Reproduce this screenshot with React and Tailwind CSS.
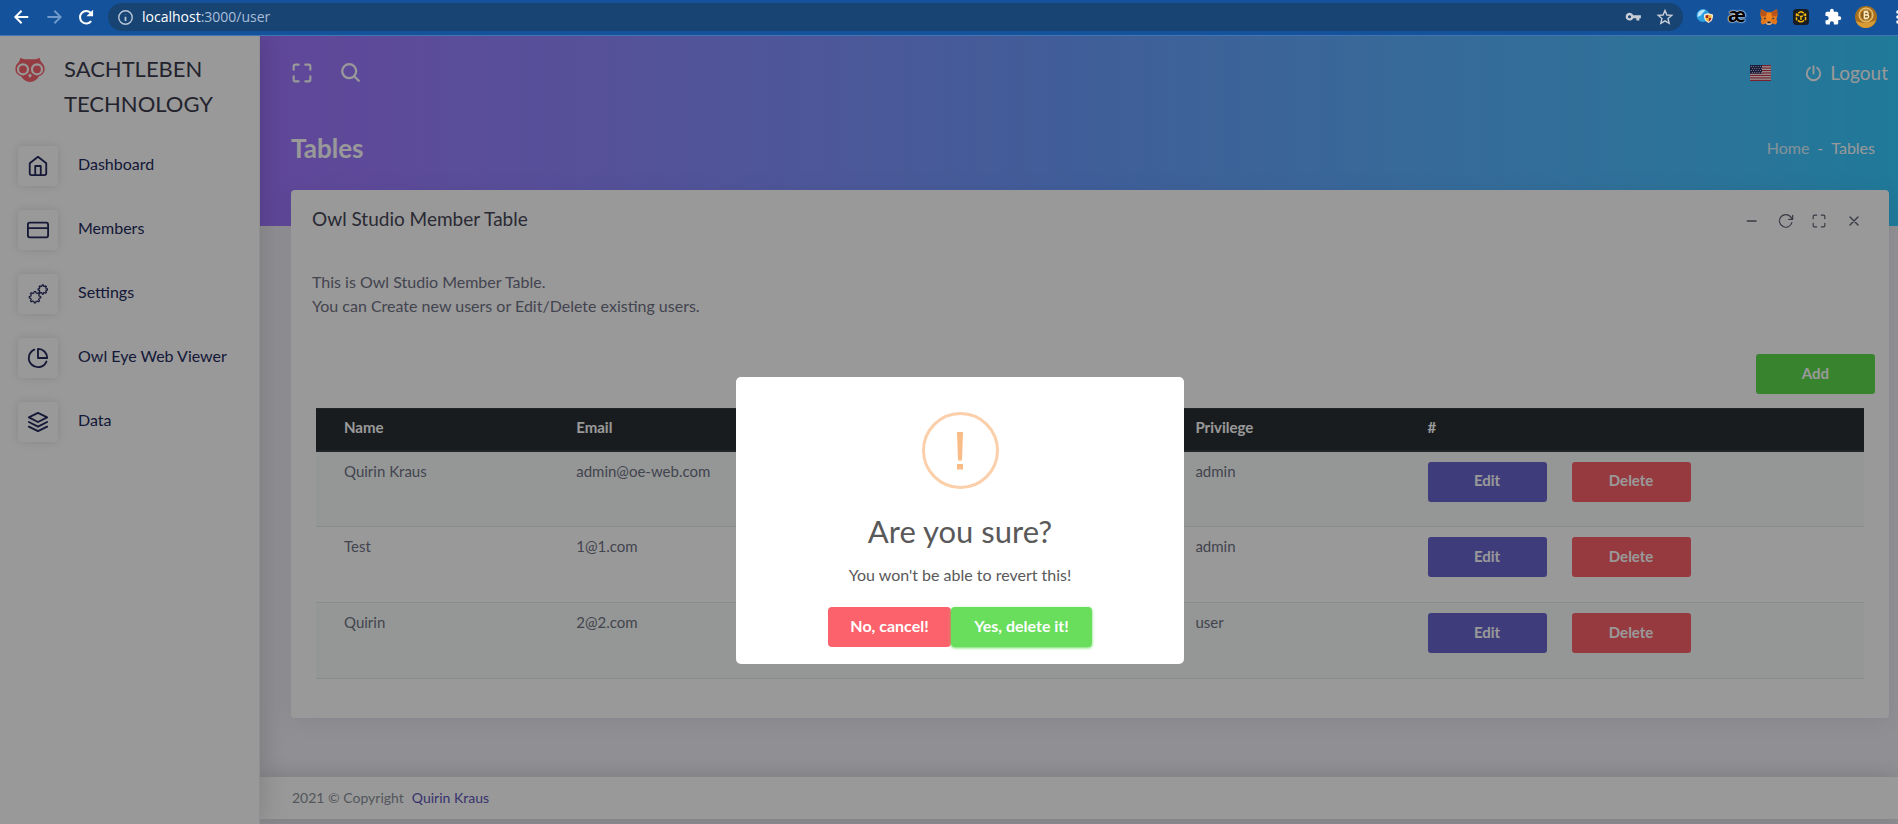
import React from "react";

const heading = "font-['Lato',sans-serif]";

function Svg({ size = 22, box = 24, width = 2, className = "", children }) {
  return (
    <svg
      width={size}
      height={size}
      viewBox={`0 0 ${box} ${box}`}
      fill="none"
      stroke="currentColor"
      strokeWidth={width}
      strokeLinecap="round"
      strokeLinejoin="round"
      className={className}
      aria-hidden="true"
    >
      {children}
    </svg>
  );
}

function gearPath(cx, cy, outer, inner, teeth) {
  const points = [];
  const step = (Math.PI * 2) / teeth;
  for (let i = 0; i < teeth; i++) {
    const a = i * step;
    [
      [inner, -0.3],
      [outer, -0.16],
      [outer, 0.16],
      [inner, 0.3],
    ].forEach(([r, k]) => {
      points.push(`${(cx + r * Math.cos(a + k * step)).toFixed(2)} ${(cy + r * Math.sin(a + k * step)).toFixed(2)}`);
    });
  }
  return `M${points.join("L")}Z`;
}

const HomeIcon = () => (
  <Svg>
    <path d="M3 9l9-7 9 7v11a2 2 0 0 1-2 2H5a2 2 0 0 1-2-2z" />
    <path d="M9 22V12h6v10" />
  </Svg>
);
const CardIcon = () => (
  <Svg>
    <rect x="1" y="4" width="22" height="16" rx="2" />
    <path d="M1 10h22" />
  </Svg>
);
const GearsIcon = () => (
  <Svg width={1.3}>
    <path d={gearPath(8.7, 15.5, 6.3, 4.8, 8)} />
    <path d={gearPath(17.2, 7.1, 5.1, 3.8, 8)} />
  </Svg>
);
const PieIcon = () => (
  <Svg>
    <path d="M21.21 15.89A10 10 0 1 1 8 2.83" />
    <path d="M22 12A10 10 0 0 0 12 2v10z" />
  </Svg>
);
const LayersIcon = () => (
  <Svg>
    <path d="M12 2 2 7l10 5 10-5-10-5z" />
    <path d="m2 17 10 5 10-5" />
    <path d="m2 12 10 5 10-5" />
  </Svg>
);
const ExpandIcon = ({ size, width }) => (
  <Svg size={size} width={width}>
    <path d="M8 2H4a2 2 0 0 0-2 2v4M22 8V4a2 2 0 0 0-2-2h-4M16 22h4a2 2 0 0 0 2-2v-4M2 16v4a2 2 0 0 0 2 2h4" />
  </Svg>
);

function Owl() {
  return (
    <svg width="30" height="26" viewBox="0 0 30 26" aria-hidden="true" className="shrink-0">
      <path
        d="M5.500 0.800 C5 2.500 4.500 4 3.600 5.300 C1.400 7 .4 9.500 .4 12 C.4 16 3 18.300 6 19.300 C8 22.500 11 25 15 25 C19 25 22 22.500 24 19.300 C27 18.300 29.600 16 29.600 12 C29.600 9.500 28.600 7 26.400 5.300 C25.500 4 25 2.500 24.500 .8 C22.500 2 20.500 2.300 18.500 2.300 L11.500 2.300 C9.500 2.300 7.500 2 5.500 .8Z"
        fill="#f9656f"
      />
      <circle cx="8" cy="12.300" r="5" fill="none" stroke="#fff" strokeWidth="2.200" />
      <circle cx="22" cy="12.300" r="5" fill="none" stroke="#fff" strokeWidth="2.200" />
      <path d="M15 16.500l1.800 2-1.800 2.400-1.800-2.400z" fill="#fff" />
    </svg>
  );
}

function Flag() {
  const stripes = [0, 1, 2, 3, 4, 5, 6];
  const stars = [];
  for (let r = 0; r < 4; r++) for (let c = 0; c < 5; c++) stars.push([1.3 + c * 2.3 + (r % 2), 1.4 + r * 2]);
  return (
    <svg width="21" height="16" viewBox="0 0 21 16" role="img" aria-label="English">
      <rect width="21" height="16" fill="#fff" />
      {stripes.map((s) => (
        <rect key={s} y={s * 2.46} width="21" height="1.23" fill="#c9364a" />
      ))}
      <rect width="12" height="8.6" fill="#2b2f62" />
      {stars.map(([x, y]) => (
        <circle key={`${x}-${y}`} cx={x} cy={y} r="0.5" fill="#fff" />
      ))}
    </svg>
  );
}

function BrowserBar() {
  return (
    <header className="flex h-9 items-center border-b border-[#4377b4] bg-[#14539c] pb-px pl-3 font-['Open_Sans',sans-serif] text-white">
      <div className="flex items-center gap-3">
        <button aria-label="Back" className="size-5">
          <Svg size={20} width={2.4}><path d="M19.500 12H5M11.500 4.500 4 12l7.500 7.500" strokeLinecap="butt" strokeLinejoin="miter" /></Svg>
        </button>
        <button aria-label="Forward" className="size-5 text-[#729bcb]">
          <Svg size={20} width={2.200}><path d="M4 12h15M12.500 4.500 20 12l-7.500 7.500" strokeLinecap="butt" strokeLinejoin="miter" /></Svg>
        </button>
        <button aria-label="Reload" className="size-5">
          <svg width="20" height="20" viewBox="0 0 24 24" fill="none" aria-hidden="true">
            <path d="M18.200 17A7.500 7.500 0 1 1 17.600 7" stroke="#fff" strokeWidth="2.400" />
            <path d="M20.500 3.200v8h-8z" fill="#fff" />
          </svg>
        </button>
      </div>
      <div className="ml-3 flex h-7 flex-1 items-center rounded-full bg-[#184474] pr-2 pl-[9px]">
        <Svg size={17} width={2} className="mr-2 shrink-0 text-[#b8c6d8]">
          <circle cx="12" cy="12" r="9.500" />
          <path d="M12 11v6M12 7v.5" strokeLinecap="butt" strokeWidth="2.500" />
        </Svg>
        <div className="flex-1 text-sm text-[#a9bed6]">
          <span className="text-white">localhost</span>:3000/user
        </div>
        <div className="flex gap-3 text-[#c9ced6]">
          <button aria-label="Passwords" className="size-5">
            <svg width="18" height="18" viewBox="0 0 24 24" fill="currentColor" fillRule="evenodd" aria-hidden="true" className="mx-auto">
              <path d="M12.300 9.700A5.200 5.200 0 1 0 12.300 13.500H16.500V16.800H20.500V13.500H22.500V9.700ZM7.400 13.700A2.100 2.100 0 1 1 7.400 9.500A2.100 2.100 0 0 1 7.400 13.700Z" />
            </svg>
          </button>
          <button aria-label="Bookmark" className="size-5">
            <Svg size={20} width={1.700}>
              <path strokeLinejoin="miter" d="m12 4.300 2.300 5.300 5.800.5-4.400 3.800 1.300 5.700-5-3-5 3 1.300-5.700-4.400-3.800 5.800-.5z" />
            </Svg>
          </button>
        </div>
      </div>
      <div className="ml-3 flex shrink-0 items-center gap-3">
        <svg width="20" height="20" viewBox="0 0 20 20" aria-hidden="true">
          <circle cx="8" cy="8.500" r="6.500" fill="#2d9fe0" />
          <path d="M3 6c2-3 5-3.500 7-3 0 2-2 2-3 4S4 9 2.500 10zM9 8l4-2 1 4-4 2z" fill="#b9e6fa" />
          <path d="M9 7.500l4.500-1.200 4.500 1.200c.2 4-1 7-4.500 8.500-3.500-1.500-4.700-4.500-4.500-8.500z" fill="#f5ead0" />
          <path d="M10.500 8.500 13.500 7.800V11h-2.900zM13.500 11h2.900c-.3 1.700-1.300 2.900-2.900 3.700z" fill="#a52016" />
          <path d="M13.500 7.800l3 .7-.1 2.500h-2.900zM10.600 11h2.900v3.700c-1.600-.8-2.600-2-2.900-3.700z" fill="#f0b429" />
        </svg>
        <span className="w-5 pb-1 text-center text-xl leading-5 font-bold text-black [text-shadow:0_0_2px_#fff,0_0_1px_#fff,0_0_1px_#fff]">æ</span>
        <svg width="20" height="20" viewBox="0 0 20 20" aria-hidden="true">
          <path d="M2 2l6 3.500h4L18 2l.6 6-1.100 4 .8 3-1.300 2.500-4-1-1.500 1.500h-3L7 16.500l-4 1L1.700 15l.8-3-1.100-4z" fill="#e2761b" />
          <path d="M2 2l6 3.500-1 4-5.500-1zM18 2l-6 3.500 1 4 5.500-1z" fill="#b9541a" />
          <path d="M8 5.500h4l1 4.500-1 4.500H8L7 10z" fill="#f6851b" />
          <path d="M5 10.500l2.500 1.300-2.200.4zM15 10.500l-2.500 1.300 2.200.4z" fill="#233447" />
          <path d="M7 16l1.500-1.500h3L13 16l-1.500 1.800h-3z" fill="#d7c1b3" />
          <path d="M8.500 14.500h3l.3 1.700H8.200z" fill="#1c1c1c" />
        </svg>
        <svg width="20" height="20" viewBox="0 0 20 20" aria-hidden="true">
          <rect x="2" y="2" width="16" height="16" rx="3.500" fill="#181c22" />
          <path d="M10 4.500l4.500 2.600v5.500L10 15.400l-4.500-2.800V7.100zM5.500 7.100 10 9.800l4.500-2.700M10 9.800v5.400" fill="none" stroke="#f0b90b" strokeWidth="1.500" strokeDasharray="3.200 0.900" />
        </svg>
        <svg width="18" height="18" viewBox="0 0 24 24" fill="#fff" aria-hidden="true" className="mx-px">
          <path d="M20.500 11H19V7a2 2 0 0 0-2-2h-4V3.500a2.500 2.500 0 0 0-5 0V5H4a2 2 0 0 0-2 2v3.800h1.500a2.700 2.700 0 0 1 0 5.400H2V20a2 2 0 0 0 2 2h3.800v-1.500a2.700 2.700 0 0 1 5.400 0V22H17a2 2 0 0 0 2-2v-4h1.500a2.500 2.500 0 0 0 0-5z" />
        </svg>
        <svg width="22" height="22" viewBox="0 0 22 22" aria-hidden="true">
          <circle cx="11" cy="11" r="11" fill="#a86f1d" />
          <circle cx="11" cy="9" r="7" fill="#c99238" stroke="#f0cf85" />
          <circle cx="11" cy="9" r="5.300" fill="#8d5c18" />
          <path d="M1 15c5 2.500 14 2.500 20-1-1 4-5 8-10 8S2 19 1 15z" fill="#d99c34" />
          <path d="M9.300 6h2.400a1.500 1.500 0 0 1 0 3H9.300h2.800a1.600 1.600 0 0 1 0 3.200H9.300zM10.200 4.500v1M12 4.500v1M10.200 12.500v1M12 12.500v1" fill="none" stroke="#fff3c9" strokeWidth="1.300" />
        </svg>
      </div>
      <button aria-label="Browser menu" className="ml-4 w-[5px] shrink-0 overflow-hidden">
        <svg width="5" height="16" viewBox="0 0 5 16" fill="#fff" aria-hidden="true">
          <circle cx="5" cy="3" r="1.800" />
          <circle cx="5" cy="8" r="1.800" />
          <circle cx="5" cy="13" r="1.800" />
        </svg>
      </button>
    </header>
  );
}

const navItems = [
  ["Dashboard", HomeIcon],
  ["Members", CardIcon],
  ["Settings", GearsIcon],
  ["Owl Eye Web Viewer", PieIcon],
  ["Data", LayersIcon],
];

function Sidebar() {
  return (
    <aside className="relative w-[260px] shrink-0 border-r border-[#f0f0f4] bg-white shadow-[0_0_28px_rgba(0,0,0,0.18)]">
      <a href="#home" className={`flex gap-[19px] pt-[15px] pl-[15px] text-[22px] leading-[35px] text-[#3b3b4d] ${heading}`}>
        <span className="pt-[6px]"><Owl /></span>
        <span>
          SACHTLEBEN
          <br />
          TECHNOLOGY
        </span>
      </a>
      <nav className="mt-[25px] flex flex-col gap-6 pl-[18px]">
        {navItems.map(([label, Icon]) => (
          <a key={label} href={`#${label}`} className={`flex items-center gap-5 text-base text-[#242a5c] ${heading}`}>
            <span className="flex size-10 items-center justify-center rounded-[4px] bg-white shadow-[0_0_9px_rgba(0,0,0,0.12)]">
              <Icon />
            </span>
            <span className="pb-1">{label}</span>
          </a>
        ))}
      </nav>
    </aside>
  );
}

const rows = [
  ["Quirin Kraus", "admin@oe-web.com", "admin"],
  ["Test", "1@1.com", "admin"],
  ["Quirin", "2@2.com", "user"],
];

const actionButton = "h-10 w-[119px] rounded-[3px] pb-[2px] text-[15px] font-bold text-white";

function MemberTable() {
  return (
    <table className="w-full table-fixed border-collapse text-left text-[15px]">
      <thead>
        <tr className="h-[42px] border-t border-b-2 border-[#383f42] bg-[#2a3032] text-white">
          <th className="w-[15%] pb-1 pl-7 font-bold">Name</th>
          <th className="w-[40%] pb-1 pl-7 font-bold">Email</th>
          <th className="w-[15%] pb-1 pl-7 font-bold">Privilege</th>
          <th className="w-[30%] pb-1 pl-7 font-bold">#</th>
        </tr>
      </thead>
      <tbody>
        {rows.map(([name, email, privilege], i) => (
          <tr key={name} className={`h-[76px] border-b border-[#e3e9eb] align-top ${i % 2 ? "bg-white" : "bg-[#f8fcfa]"}`}>
            <td className="pt-[7px] pl-7 leading-6">{name}</td>
            <td className="pt-[7px] pl-7 leading-6">{email}</td>
            <td className="pt-[7px] pl-7 leading-6">{privilege}</td>
            <td className="pt-[10px] pl-7">
              <div className="flex gap-[25px]">
                <button className={`${actionButton} bg-[#6965cd]`}>Edit</button>
                <button className={`${actionButton} bg-[#fb626b]`}>Delete</button>
              </div>
            </td>
          </tr>
        ))}
      </tbody>
    </table>
  );
}

function MemberCard() {
  return (
    <section className="rounded-[4px] bg-white pb-[39px] text-[#6f7285] shadow-[0_4px_25px_rgba(60,60,110,0.10)]">
      <div className="flex items-start justify-between pt-[14px] pr-[27px] pl-[21px]">
        <h2 className={`text-[19px] leading-[30px] text-[#464655] ${heading}`}>Owl Studio Member Table</h2>
        <div className="flex h-[34px] items-center gap-[18px] text-[#5d6072]">
          <button aria-label="Minimize" className="size-4"><Svg size={16} width={2.200}><path d="M5 12h13" /></Svg></button>
          <button aria-label="Refresh" className="size-4">
            <Svg size={16} width={1.800}><path d="M22 3.500v6h-6M20.800 14.500A9.500 9.500 0 1 1 18.500 5.200L22 9.500" /></Svg>
          </button>
          <button aria-label="Full screen" className="size-4"><ExpandIcon size={14} width={2} /></button>
          <button aria-label="Close" className="size-4"><Svg size={16} width={2}><path d="M6 6l12 12M18 6 6 18" /></Svg></button>
        </div>
      </div>
      <p className="px-[21px] pt-8 text-base leading-6">
        This is Owl Studio Member Table.
        <br />
        You can Create new users or Edit/Delete existing users.
      </p>
      <div className="flex justify-end pt-9 pr-[14px] pb-[14px]">
        <button className={`${actionButton} bg-[#5dda4d]`}>Add</button>
      </div>
      <div className="px-[25px]">
        <MemberTable />
      </div>
    </section>
  );
}

function ConfirmDialog() {
  return (
    <div className="absolute inset-0 flex items-start justify-center bg-black/40 pt-[341px] pl-[22px]">
      <div role="dialog" aria-modal="true" aria-labelledby="confirm-title" className="flex h-[287px] w-[448px] flex-col items-center rounded-[5px] bg-white pt-[35px] text-[#595959]">
        <div className="flex size-[77px] items-center justify-center rounded-full border-[3px] border-[#fbcfa9]">
          <svg width="8" height="38" viewBox="0 0 8 38" fill="#f9bc88" aria-hidden="true">
            <path d="M1 0h6l-1 28.500H2zM1 32h6v5.500H1z" />
          </svg>
        </div>
        <h2 id="confirm-title" className={`mt-[22px] text-[31px] leading-10 ${heading}`}>Are you sure?</h2>
        <p className="mt-3 text-base leading-6">You won't be able to revert this!</p>
        <div className="mt-5 flex text-base font-bold text-white">
          <button className="h-10 w-[123px] rounded-[4px] bg-[#fb626b] pb-[2px]">No, cancel!</button>
          <button className="h-10 w-[141px] rounded-[4px] bg-[#69dd5c] pb-[2px] shadow-[0_1px_3px_#69dd5c]">Yes, delete it!</button>
        </div>
      </div>
    </div>
  );
}

export default function App() {
  return (
    <div className="flex min-h-screen flex-col font-['Lato',sans-serif]">
      <BrowserBar />
      <div className="relative flex flex-1 overflow-hidden">
        <Sidebar />
        <main className="flex min-w-0 flex-1 flex-col bg-[#f1f1f7]">
          <div className="h-[190px] bg-linear-to-r from-[#a176ff] via-[#6b9dff] to-[#35cbff] text-white">
            <div className="flex items-center justify-between pt-[22px] pr-[10px] pl-8">
              <div className="flex items-center gap-7">
                <button aria-label="Toggle full screen"><ExpandIcon size={20} width={2.600} /></button>
                <button aria-label="Search"><Svg size={21} width={2.600}><circle cx="10.500" cy="10.500" r="8" /><path d="m16.500 16.500 5 5" /></Svg></button>
              </div>
              <div className="flex items-center gap-[34px] pt-px">
                <button aria-label="Language"><Flag /></button>
                <a href="#logout" className="flex items-center gap-2 text-[19px] leading-7">
                  <Svg size={17} width={2.600}><path d="M12 1.500V12M7 4a9.500 9.500 0 1 0 10 0" /></Svg>
                  Logout
                </a>
              </div>
            </div>
            <div className="flex items-center justify-between pt-[45px] pr-[23px] pl-[31px]">
              <h1 className={`text-[26px] leading-8 font-bold ${heading}`}>Tables</h1>
              <nav aria-label="Breadcrumb" className="flex gap-2 text-base">
                <a href="#home" className="text-white/80">Home</a>
                <span>-</span>
                <span>Tables</span>
              </nav>
            </div>
          </div>
          <div className="-mt-9 pr-[9px] pl-[31px]">
            <MemberCard />
          </div>
          <footer className="mt-auto mb-[5px] flex h-[42px] items-center gap-2 bg-white pl-8 text-sm text-[#8a9199] shadow-[0_0_22px_rgba(0,0,0,0.16)]">
            2021 © Copyright
            <a href="#author" className="text-[#5c55b8]">Quirin Kraus</a>
          </footer>
        </main>
        <ConfirmDialog />
      </div>
    </div>
  );
}
